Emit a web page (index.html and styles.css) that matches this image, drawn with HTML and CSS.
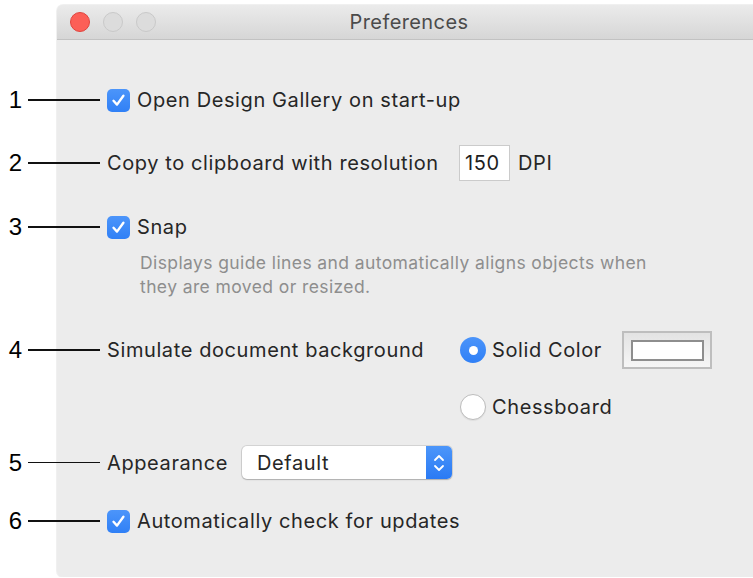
FILE: index.html
```html
<!DOCTYPE html>
<html lang="en">
<head>
<meta charset="utf-8">
<title>Preferences</title>
<link rel="stylesheet" href="styles.css">
</head>
<body>
<div class="window">
  <div class="titlebar">
    <div class="lights">
      <span class="light close"></span>
      <span class="light"></span>
      <span class="light"></span>
    </div>
    <div class="title">Preferences</div>
    <div></div>
  </div>

  <div class="content">
    <div class="row r1">
      <span class="callout"><b>1</b><i></i></span>
      <label class="check">
        <span class="box"><svg viewBox="0 0 23 23" width="23" height="23"><path d="M6.5 11.8 L10 15.6 L16.4 6.8" fill="none" stroke="#fff" stroke-width="2.4" stroke-linecap="round" stroke-linejoin="round"/></svg></span>
        Open Design Gallery on start-up
      </label>
    </div>

    <div class="row r2">
      <span class="callout"><b>2</b><i></i></span>
      <span class="lbl-wide">Copy to clipboard with resolution</span>
      <span class="field">150</span>
      <span>DPI</span>
    </div>

    <div class="row r3">
      <span class="callout"><b>3</b><i></i></span>
      <label class="check">
        <span class="box"><svg viewBox="0 0 23 23" width="23" height="23"><path d="M6.5 11.8 L10 15.6 L16.4 6.8" fill="none" stroke="#fff" stroke-width="2.4" stroke-linecap="round" stroke-linejoin="round"/></svg></span>
        Snap
      </label>
    </div>
    <p class="desc">Displays guide lines and automatically aligns objects when<br>they are moved or resized.</p>

    <div class="bg-grid">
      <div class="bg-label">
        <span class="callout"><b>4</b><i></i></span>
        Simulate document background
      </div>
      <div class="option">
        <span class="radio on"></span>
        <span>Solid Color</span>
        <span class="well"><span class="swatch"></span></span>
      </div>
      <div class="option opt2">
        <span class="radio off"></span>
        <span>Chessboard</span>
      </div>
    </div>

    <div class="row r5">
      <span class="callout"><b>5</b><i></i></span>
      <span class="lbl-short">Appearance</span>
      <div class="popup">
        <span class="popup-value">Default</span>
        <span class="stepper"><svg viewBox="0 0 26 33" width="26" height="33"><path d="M9 14 L13 10 L17 14 M9 20 L13 24 L17 20" fill="none" stroke="#fff" stroke-width="1.8" stroke-linecap="round" stroke-linejoin="round"/></svg></span>
      </div>
    </div>

    <div class="row r6">
      <span class="callout"><b>6</b><i></i></span>
      <label class="check">
        <span class="box"><svg viewBox="0 0 23 23" width="23" height="23"><path d="M6.5 11.8 L10 15.6 L16.4 6.8" fill="none" stroke="#fff" stroke-width="2.4" stroke-linecap="round" stroke-linejoin="round"/></svg></span>
        Automatically check for updates
      </label>
    </div>
  </div>
</div>
</body>
</html>
```

FILE: styles.css
```css
html, body {
  margin: 0;
  background: #fff;
  overflow: hidden;
}

body {
  font-family: Inter, "Liberation Sans", sans-serif;
  font-size: 20px;
  letter-spacing: 0.6px;
  color: #262626;
}

.window {
  margin: 5px 0 0 57px;
  width: 704px;
  height: 572px;
  background: #ececec;
  border-radius: 6px;
  box-shadow: 0 0 0 1px rgba(0, 0, 0, 0.06);
  display: flex;
  flex-direction: column;
}

/* title bar with traffic lights */
.titlebar {
  height: 35px;
  box-sizing: border-box;
  border-bottom: 1px solid #c2c2c2;
  background: linear-gradient(#ebebeb, #d6d6d6);
  border-radius: 6px 6px 0 0;
  display: grid;
  grid-template-columns: 1fr auto 1fr;
  align-items: center;
}

.lights {
  display: flex;
  gap: 13px;
  padding-left: 13px;
}

.light {
  width: 20px;
  height: 20px;
  box-sizing: border-box;
  border-radius: 50%;
  background: #dcdcdc;
  border: 1px solid #c9c9c9;
}

.light.close {
  background: #fc5f57;
  border-color: #e0443e;
}

.title {
  font-size: 20px;
  color: #4b4b4b;
  letter-spacing: 0.4px;
}

/* form area */
.content {
  padding: 48px 0 0 50px;
}

.row {
  display: flex;
  align-items: center;
  position: relative;
}

.callout {
  position: absolute;
  left: -107px;
  width: 100px;
  top: 50%;
  transform: translateY(-50%);
  display: flex;
  align-items: center;
}

.callout b {
  width: 22px;
  text-align: right;
  font: 400 24px "Liberation Sans", sans-serif;
  letter-spacing: 0;
  color: #000;
}

.callout i {
  flex: 1;
  height: 1.6px;
  margin-left: 6px;
  background: #111;
}

.check {
  display: flex;
  align-items: center;
}

.box {
  width: 23px;
  height: 23px;
  border-radius: 5px;
  background: linear-gradient(#4c95fa, #3080f6);
  margin-right: 7px;
  display: flex;
}

.r1 { height: 24px; }
.r2 { height: 36px; margin-top: 33px; }
.r3 { height: 24px; margin-top: 34px; }

.lbl-wide { width: 352px; }

.field {
  width: 51px;
  height: 36px;
  box-sizing: border-box;
  background: #fff;
  border: 1px solid #cbcbcb;
  padding-left: 5px;
  display: flex;
  align-items: center;
  margin-right: 8px;
  color: #1e1e1e;
}

.desc {
  margin: 12px 0 0;
  padding-left: 33px;
  font-size: 17.5px;
  line-height: 24px;
  letter-spacing: 0.4px;
  color: #8e8e8e;
}

/* background selection */
.bg-grid {
  margin-top: 32px;
  display: grid;
  grid-template-columns: 353px auto;
  grid-template-rows: 38px 26px;
  row-gap: 25px;
}

.bg-label {
  position: relative;
  display: flex;
  align-items: center;
}

.option {
  display: flex;
  align-items: center;
  gap: 6px;
}

.opt2 {
  grid-column: 2;
}

.radio {
  width: 26px;
  height: 26px;
  box-sizing: border-box;
  border-radius: 50%;
  display: flex;
  align-items: center;
  justify-content: center;
}

.radio.on {
  background: linear-gradient(#4b94fa, #3080f6);
}

.radio.on::after {
  content: "";
  width: 9px;
  height: 9px;
  border-radius: 50%;
  background: #fff;
}

.radio.off {
  background: #fff;
  border: 1px solid #bcbcbc;
  box-shadow: 0 1px 1px rgba(0, 0, 0, 0.06);
}

.well {
  margin-left: 14px;
  width: 90px;
  height: 38px;
  box-sizing: border-box;
  border: 2px solid #bebebe;
  background: linear-gradient(#e3e3e3, #f6f6f6);
  padding: 7px 6px 6px 7px;
  display: flex;
}

.swatch {
  flex: 1;
  background: #fff;
  border: 2px solid #8e8e8e;
}

/* appearance popup */
.r5 { height: 33px; margin-top: 26px; }
.lbl-short { width: 135px; }

.popup {
  width: 210px;
  height: 33px;
  border-radius: 5px;
  background: #fff;
  box-shadow: 0 0 0 1px rgba(0, 0, 0, 0.1), 0 1px 1.5px rgba(0, 0, 0, 0.18);
  display: flex;
  align-items: center;
}

.popup-value {
  flex: 1;
  padding-left: 15px;
}

.stepper {
  width: 26px;
  height: 33px;
  border-radius: 0 5px 5px 0;
  background: linear-gradient(#4c96fa, #2a7af4);
  display: flex;
}

.r6 { height: 24px; margin-top: 30px; }
```
